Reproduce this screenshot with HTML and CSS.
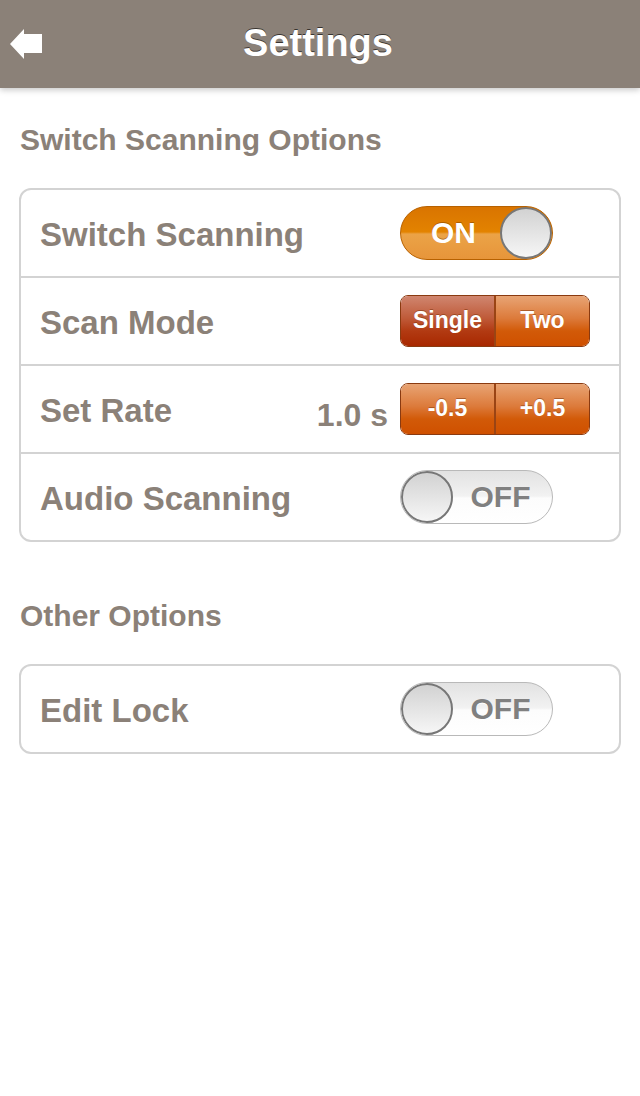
FILE: index.html
```html
<!DOCTYPE html>
<html lang="en">
  <head>
    <meta charset="UTF-8" />
    <meta name="viewport" content="width=device-width, initial-scale=1.0" />
    <title>Settings</title>
    <link rel="stylesheet" href="styles.css">
  </head>
  <body>
    <header class="nav-bar">
      <a href="#" class="nav-bar__back" aria-label="Back">
        <svg width="34" height="32" viewBox="0 0 34 32">
          <polygon points="0,15 14,0 14,5 32,5 32,24 14,24 14,30" fill="#ffffff" />
        </svg>
      </a>
      <h1 class="nav-bar__title">Settings</h1>
    </header>

    <main class="settings">
      <h2 class="settings__heading">Switch Scanning Options</h2>
      <ul class="group">
        <li class="group__row">
          <span class="group__label">Switch Scanning</span>
          <div class="group__control">
            <span class="toggle toggle--on">
              <span class="toggle__text">ON</span>
              <span class="toggle__knob"></span>
            </span>
          </div>
        </li>
        <li class="group__row">
          <span class="group__label">Scan Mode</span>
          <div class="group__control">
            <div class="segmented">
              <button class="segmented__item segmented__item--active">Single</button>
              <button class="segmented__item">Two</button>
            </div>
          </div>
        </li>
        <li class="group__row">
          <span class="group__label">Set Rate</span>
          <span class="group__value">1.0 s</span>
          <div class="group__control">
            <div class="segmented">
              <button class="segmented__item">-0.5</button>
              <button class="segmented__item">+0.5</button>
            </div>
          </div>
        </li>
        <li class="group__row">
          <span class="group__label">Audio Scanning</span>
          <div class="group__control">
            <span class="toggle toggle--off">
              <span class="toggle__knob"></span>
              <span class="toggle__text">OFF</span>
            </span>
          </div>
        </li>
      </ul>

      <h2 class="settings__heading settings__heading--next">Other Options</h2>
      <ul class="group">
        <li class="group__row">
          <span class="group__label">Edit Lock</span>
          <div class="group__control">
            <span class="toggle toggle--off">
              <span class="toggle__knob"></span>
              <span class="toggle__text">OFF</span>
            </span>
          </div>
        </li>
      </ul>
    </main>
  </body>
</html>
```

FILE: styles.css
```css
* {
  box-sizing: border-box;
}

body {
  margin: 0;
  background-color: #ffffff;
  font-family: "Liberation Sans", Arial, sans-serif;
  font-weight: bold;
  color: #8b8178;
}

/* top bar */
.nav-bar {
  position: relative;
  display: flex;
  align-items: center;
  justify-content: center;
  height: 88px;
  background-color: #8b8178;
  box-shadow: 0 2px 6px rgba(0, 0, 0, 0.22);
}

.nav-bar__back {
  position: absolute;
  left: 10px;
  top: 29px;
  display: block;
  line-height: 0;
}

.nav-bar__title {
  margin: 0 4px 2px 0;
  color: #ffffff;
  font-size: 38px;
  text-shadow: 0 -1px 0 rgba(0, 0, 0, 0.6);
}

/* content */
.settings {
  padding: 0 19px;
}

.settings__heading {
  margin: 34px 0 30px 1px;
  font-size: 30px;
  line-height: 36px;
}

.settings__heading--next {
  margin-top: 56px;
}

.group {
  list-style: none;
  margin: 0;
  padding: 0;
  border: 2px solid #d3d3d3;
  border-radius: 12px;
}

.group__row {
  display: flex;
  align-items: center;
  height: 86px;
  padding-left: 19px;
}

.group__row + .group__row {
  height: 88px;
  border-top: 2px solid #d3d3d3;
}

.group__label {
  flex: 1;
  padding-top: 3px;
  font-size: 33px;
}

.group__value {
  margin: 12px 12px 0 0;
  font-size: 32px;
}

.group__control {
  width: 190px;
  margin-right: 29px;
}

/* on / off switch */
.toggle {
  display: flex;
  align-items: center;
  width: 153px;
  height: 54px;
  border-radius: 27px;
  font-size: 30px;
  overflow: hidden;
}

.toggle--on {
  background: linear-gradient(#d97400 0%, #e38300 48%, #eba347 52%, #e7953a 100%);
  border: 1px solid #b76100;
  color: #ffffff;
  text-shadow: 0 -1px 0 rgba(120, 60, 0, 0.5);
}

.toggle--off {
  background: linear-gradient(#e2e2e2 0%, #f2f2f2 48%, #fcfcfc 52%, #ffffff 100%);
  border: 1px solid #b9b9b9;
  color: #808080;
  text-shadow: 0 1px 0 #ffffff;
}

.toggle__text {
  flex: 1;
  text-align: center;
}

.toggle--on .toggle__text {
  padding-left: 6px;
}

.toggle--off .toggle__text {
  padding-right: 4px;
}

.toggle__knob {
  width: 52px;
  height: 52px;
  border-radius: 50%;
  border: 2px solid #777777;
  background: linear-gradient(#d2d2d2, #f6f6f6);
  flex-shrink: 0;
}

/* segmented buttons */
.segmented {
  display: flex;
  height: 52px;
  border: 1px solid #8a3a10;
  border-radius: 8px;
  overflow: hidden;
}

.segmented__item {
  flex: 1;
  margin: 0;
  padding: 0 0 2px;
  border: none;
  font-family: "Liberation Sans", Arial, sans-serif;
  font-weight: bold;
  font-size: 23px;
  color: #ffffff;
  text-shadow: 0 -1px 0 rgba(110, 40, 0, 0.45);
  background: linear-gradient(#e8a474 0%, #dc7a3a 45%, #d25a08 70%, #cf5000 100%);
  cursor: pointer;
}

.segmented__item + .segmented__item {
  border-left: 2px solid #9a4414;
}

.segmented__item--active {
  background: linear-gradient(#d08670 0%, #bf5a38 45%, #b23a12 70%, #a82800 100%);
}
```
